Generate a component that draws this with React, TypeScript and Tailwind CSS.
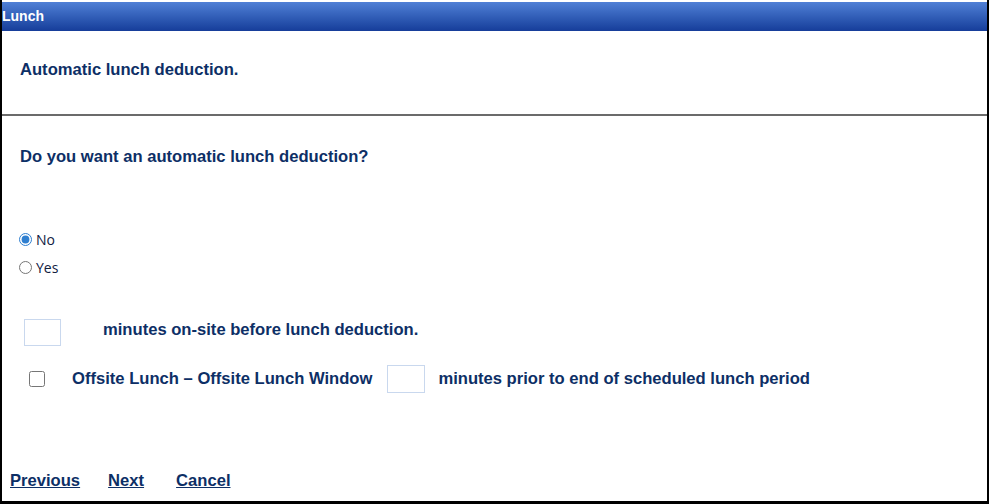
import React, { useState } from "react";

const LunchPage = () => {
  const [auto, setAuto] = useState("no");
  const [offsite, setOffsite] = useState(false);

  return (
    <div
      className="w-[989px] h-[504px] bg-white border-x-2 border-b-[3px] border-black flex flex-col text-[#0d2f66]"
      style={{ fontFamily: '"Liberation Sans", Arial, sans-serif' }}
    >
      {/* Title bar */}
      <div className="mt-[2px] h-[29px] bg-gradient-to-b from-[#5080d6] to-[#163d9a] flex items-center text-white font-bold text-[14px] px-[0px]">
        Lunch
      </div>

      {/* Header */}
      <div className="h-[85px] border-b-2 border-[#6b6b6b] pl-[18px] pt-[28px]">
        <h2 className="font-bold text-[16.6px] leading-[22px]">Automatic lunch deduction.</h2>
      </div>

      {/* Body */}
      <div className="flex-1 flex flex-col">
        <p className="font-bold text-[16.6px] leading-[22px] pl-[18px] pt-[30px]">
          Do you want an automatic lunch deduction?
        </p>

        <div
          className="flex flex-col gap-[7px] pl-[17px] pt-[61px] text-[14px] text-[#10203f]"
          style={{ fontFamily: '"Open Sans", "Liberation Sans", sans-serif' }}
        >
          <label className="flex items-center gap-[4px] h-[21px]">
            <input
              type="radio"
              name="auto"
              checked={auto === "no"}
              onChange={() => setAuto("no")}
              className="w-[13px] h-[13px] m-0 accent-[#2f7fd0]"
            />
            No
          </label>
          <label className="flex items-center gap-[4px] h-[21px]">
            <input
              type="radio"
              name="auto"
              checked={auto === "yes"}
              onChange={() => setAuto("yes")}
              className="w-[13px] h-[13px] m-0"
            />
            Yes
          </label>
        </div>

        <div className="flex items-center pl-[22px] pt-[41px] font-bold text-[16.6px]">
          <input
            type="text"
            className="w-[37px] h-[27px] border border-[#c9d8ee] outline-none"
          />
          <span className="ml-[42px] -mt-[4px]">minutes on-site before lunch deduction.</span>
        </div>

        <div className="flex items-center pl-[27px] pt-[19px] font-bold text-[16.6px]">
          <input
            type="checkbox"
            checked={offsite}
            onChange={() => setOffsite(!offsite)}
            className="w-[16px] h-[16px] m-0"
          />
          <span className="ml-[27px]">Offsite Lunch – Offsite Lunch Window</span>
          <input
            type="text"
            className="ml-[15px] w-[38px] h-[28px] border border-[#c9d8ee] outline-none"
          />
          <span className="ml-[13px]">minutes prior to end of scheduled lunch period</span>
        </div>

        <div className="mt-auto flex items-center gap-[28px] pl-[8px] pb-[7px] font-bold text-[16.6px]">
          <a href="#" className="underline text-[#0d2f66]">Previous</a>
          <a href="#" className="underline text-[#0d2f66]">Next</a>
          <a href="#" className="underline text-[#0d2f66] ml-[4px]">Cancel</a>
        </div>
      </div>
    </div>
  );
};

export default LunchPage;
